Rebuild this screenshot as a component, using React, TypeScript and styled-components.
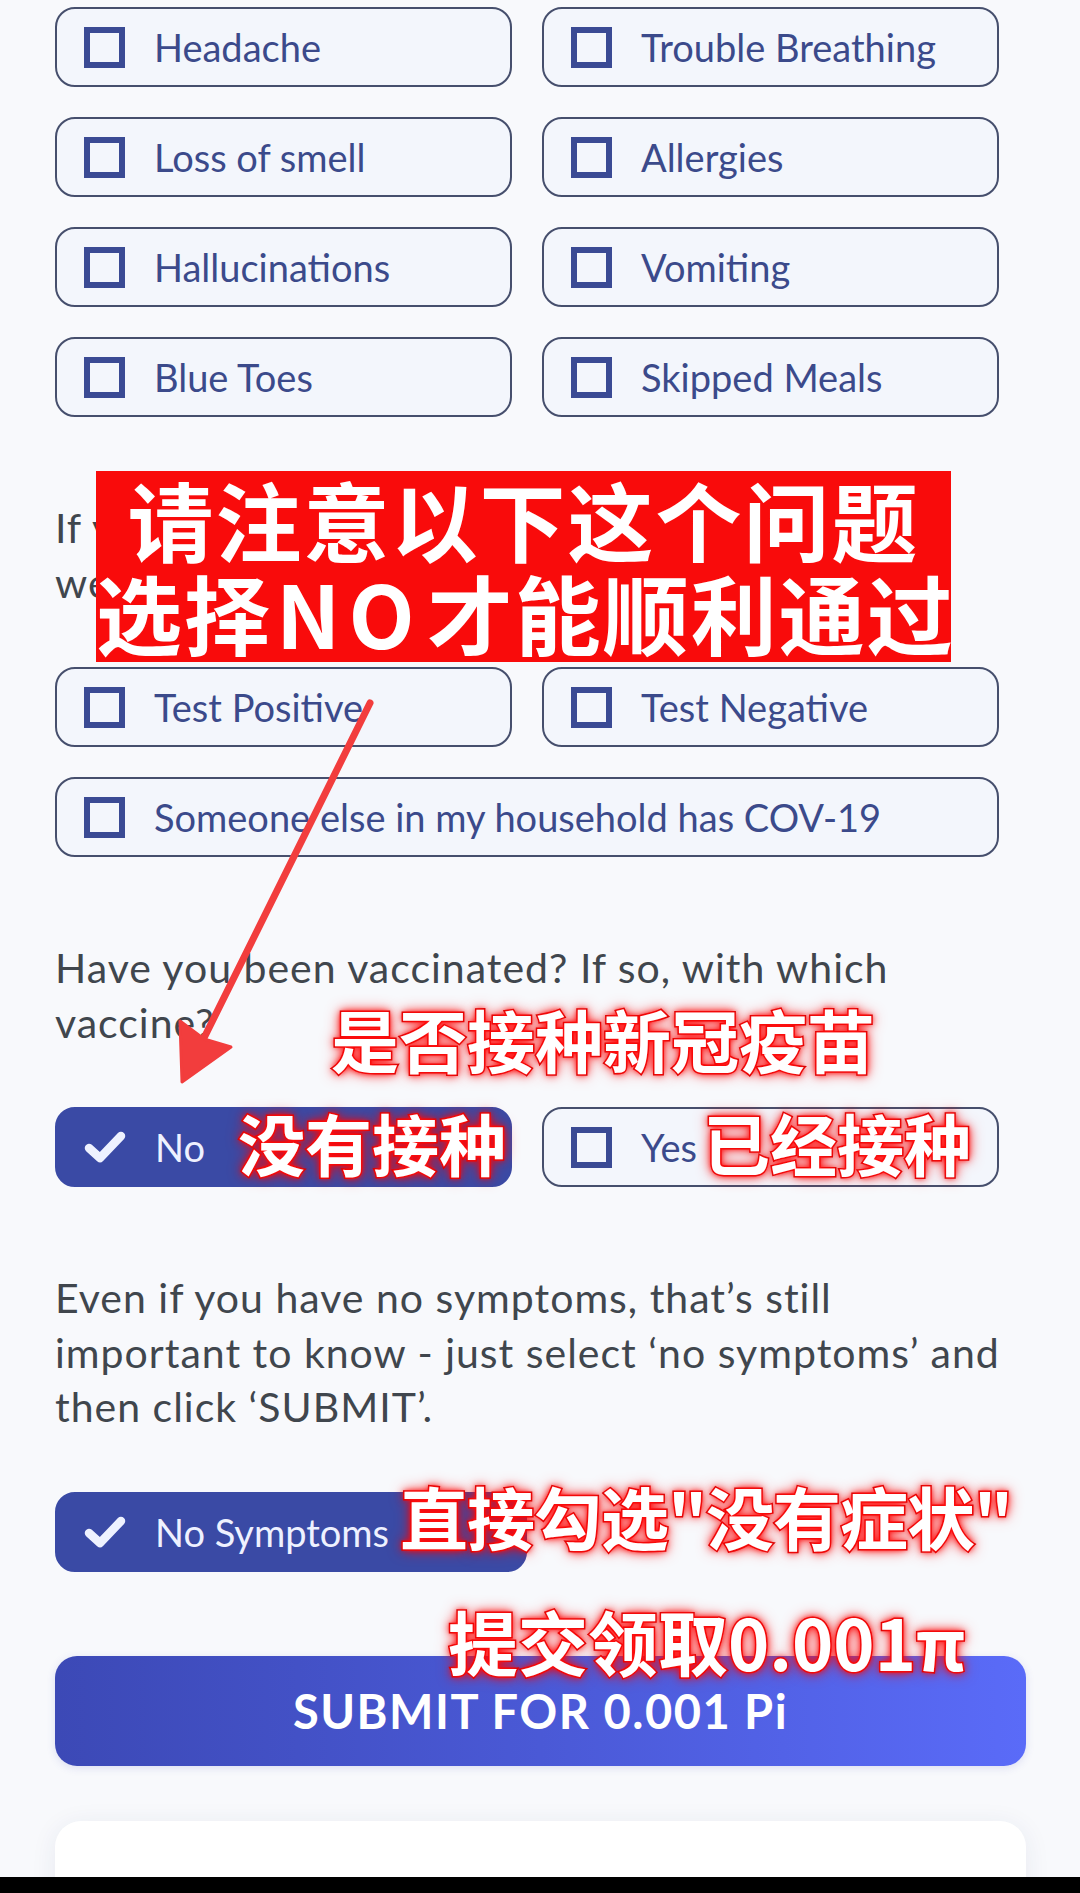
import React from "react";
import styled, { createGlobalStyle } from "styled-components";

const GlobalStyle = createGlobalStyle`
  html, body {
    margin: 0;
    padding: 0;
    background: #f8f9fc;
  }
  body {
    font-family: Lato, "Noto Sans", sans-serif;
  }
`;

const Screen = styled.div`
  width: 1080px;
  height: 1893px;
  display: flex;
  flex-direction: column;
  overflow: hidden;
  background: #f8f9fc;
`;

const Content = styled.main`
  position: relative;
  flex: 1;
  min-height: 0;
  overflow: hidden;
  padding: 7px 54px 0 55px;
`;

const OptionGrid = styled.div<{ $columns?: string; $top?: number }>`
  display: grid;
  grid-template-columns: ${(p) => p.$columns ?? "457px 457px"};
  gap: 30px;
  margin-top: ${(p) => p.$top ?? 57}px;
`;

const Option = styled.label<{ $checked?: boolean; $full?: boolean }>`
  box-sizing: border-box;
  height: 80px;
  display: flex;
  align-items: center;
  gap: 29px;
  padding-left: 27px;
  border: 2px solid ${(p) => (p.$checked ? "#3a4aa5" : "#464f6d")};
  border-radius: 20px;
  background: ${(p) => (p.$checked ? "#3a4aa5" : "#f3f6fc")};
  color: ${(p) => (p.$checked ? "#eef1ff" : "#3b4a8b")};
  font-size: 38px;
  white-space: nowrap;
  grid-column: ${(p) => (p.$full ? "1 / -1" : "auto")};
`;

const Box = styled.span`
  box-sizing: border-box;
  flex: 0 0 41px;
  width: 41px;
  height: 41px;
  border: 6px solid #3a4a94;
`;

const CheckMark = styled.svg`
  flex: 0 0 42px;
  width: 42px;
  height: 32px;
`;

const Question = styled.p`
  margin: 84px 0 0;
  font-size: 41px;
  letter-spacing: 1px;
  line-height: 54.5px;
  color: #40464d;
  white-space: nowrap;
`;

const SubmitButton = styled.button`
  display: block;
  width: 100%;
  height: 110px;
  margin-top: 84px;
  border: none;
  border-radius: 22px;
  background: linear-gradient(90deg, #3c49b6 0%, #4a59d6 50%, #5a6bf8 100%);
  color: #ffffff;
  font-family: Lato, "Noto Sans", sans-serif;
  font-weight: 700;
  font-size: 47px;
  letter-spacing: 1.5px;
  box-shadow: 0 2px 8px rgba(60, 70, 180, 0.15);
`;

const InfoCard = styled.section`
  margin-top: 55px;
  height: 240px;
  background: #ffffff;
  border-radius: 26px;
  box-shadow: 0 4px 26px rgba(40, 50, 100, 0.08);
`;

const NavBar = styled.div`
  flex: 0 0 16px;
  background: #000;
`;

const Banner = styled.div`
  position: absolute;
  left: 96px;
  top: 471px;
  width: 855px;
  padding: 1px 0 4px;
  background: #f90b0b;
  color: #ffffff;
  font-family: "Noto Sans CJK SC", sans-serif;
  font-weight: 700;
  font-size: 86px;
  line-height: 93px;
  letter-spacing: 2px;
  text-align: center;
  white-space: nowrap;
`;

const BannerLatin = styled.span`
  margin: 0 4px;
  letter-spacing: 8px;
`;

const Callout = styled.div<{ $x: number; $y: number; $size: number; $track?: number }>`
  position: absolute;
  left: ${(p) => p.$x}px;
  top: ${(p) => p.$y}px;
  font-family: "Noto Sans CJK SC", sans-serif;
  font-weight: 700;
  font-size: ${(p) => p.$size}px;
  letter-spacing: ${(p) => p.$track ?? 0}px;
  line-height: 1;
  color: #ffffff;
  white-space: nowrap;
  -webkit-text-stroke: 3px #d00000;
  paint-order: stroke fill;
  text-shadow: 0 0 4px #ff1a1a, 0 0 9px #ff0000, 0 0 15px rgba(255, 0, 0, 0.8);
`;

const ArrowSvg = styled.svg`
  position: absolute;
  left: 150px;
  top: 690px;
  width: 240px;
  height: 400px;
  pointer-events: none;
`;

type Opt = { label: string; checked?: boolean; full?: boolean };

const OptionItem = ({ label, checked, full }: Opt) => (
  <Option $checked={checked} $full={full}>
    {checked ? (
      <CheckMark viewBox="0 0 42 32">
        <path
          d="M5 17 L16 27 L37 5"
          fill="none"
          stroke="#eef2ff"
          strokeWidth="8.5"
          strokeLinecap="round"
          strokeLinejoin="round"
        />
      </CheckMark>
    ) : (
      <Box />
    )}
    <span>{label}</span>
  </Option>
);

const symptoms: Opt[] = [
  { label: "Headache" },
  { label: "Trouble Breathing" },
  { label: "Loss of smell" },
  { label: "Allergies" },
  { label: "Hallucinations" },
  { label: "Vomiting" },
  { label: "Blue Toes" },
  { label: "Skipped Meals" },
];

const tests: Opt[] = [
  { label: "Test Positive" },
  { label: "Test Negative" },
  { label: "Someone else in my household has COV-19", full: true },
];

const vaccine: Opt[] = [{ label: "No", checked: true }, { label: "Yes" }];

export default function App() {
  return (
    <>
      <GlobalStyle />
      <Screen>
        <Content>
          <OptionGrid $top={0}>
            {symptoms.map((o) => (
              <OptionItem key={o.label} {...o} />
            ))}
          </OptionGrid>

          <Question>
            If you have been tested for COV-19, what
            <br />
            were the results?
          </Question>
          <OptionGrid>
            {tests.map((o) => (
              <OptionItem key={o.label} {...o} />
            ))}
          </OptionGrid>

          <Question>
            Have you been vaccinated? If so, with which
            <br />
            vaccine?
          </Question>
          <OptionGrid>
            {vaccine.map((o) => (
              <OptionItem key={o.label} {...o} />
            ))}
          </OptionGrid>

          <Question>
            Even if you have no symptoms, that’s still
            <br />
            important to know - just select ‘no symptoms’ and
            <br />
            then click ‘SUBMIT’.
          </Question>
          <OptionGrid $columns="472px">
            <OptionItem label="No Symptoms" checked />
          </OptionGrid>

          <SubmitButton type="button">SUBMIT FOR 0.001 Pi</SubmitButton>

          <InfoCard />

          <Banner>
            请注意以下这个问题
            <br />
            选择<BannerLatin>NO</BannerLatin>才能顺利通过
          </Banner>

          <ArrowSvg viewBox="150 690 240 400">
            <line
              x1="370"
              y1="703"
              x2="203"
              y2="1040"
              stroke="#f23d3d"
              strokeWidth="7"
              strokeLinecap="round"
            />
            <polygon
              points="182,1082 231,1047 204,1039 180,1021"
              fill="#f23d3d"
              stroke="#f23d3d"
              strokeWidth="3"
              strokeLinejoin="round"
            />
          </ArrowSvg>

          <Callout $x={331} $y={1005} $size={68}>
            是否接种新冠疫苗
          </Callout>
          <Callout $x={238} $y={1108} $size={67}>
            没有接种
          </Callout>
          <Callout $x={703} $y={1108} $size={67}>
            已经接种
          </Callout>
          <Callout $x={400} $y={1482} $size={68} $track={-1}>
            直接勾选"没有症状"
          </Callout>
          <Callout $x={448} $y={1606} $size={70}>
            提交领取0.001π
          </Callout>
        </Content>
        <NavBar />
      </Screen>
    </>
  );
}
